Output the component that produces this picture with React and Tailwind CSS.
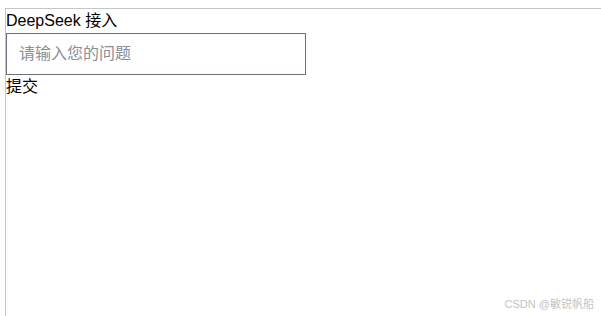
export default function App() {
  return (
    <div className="relative w-[601px] h-[316px] bg-white pl-[5px] pt-[8px] font-['Liberation_Sans','Noto_Sans_CJK_SC',sans-serif] text-black">
      <div className="h-full border-l border-t border-[#c6c6c6]">
        <div className="text-base leading-6">DeepSeek 接入</div>
        <input
          className="block w-[300px] h-[42px] border border-[#6b7280] px-3 text-base outline-none placeholder:text-[#8a8f98]"
          placeholder="请输入您的问题"
        />
        <button className="block text-base leading-6 p-0">提交</button>
      </div>
      <div className="absolute right-[7px] bottom-[6px] text-[11px] leading-none text-[#c4c4c4]">
        CSDN @敏锐帆船
      </div>
    </div>
  );
}
